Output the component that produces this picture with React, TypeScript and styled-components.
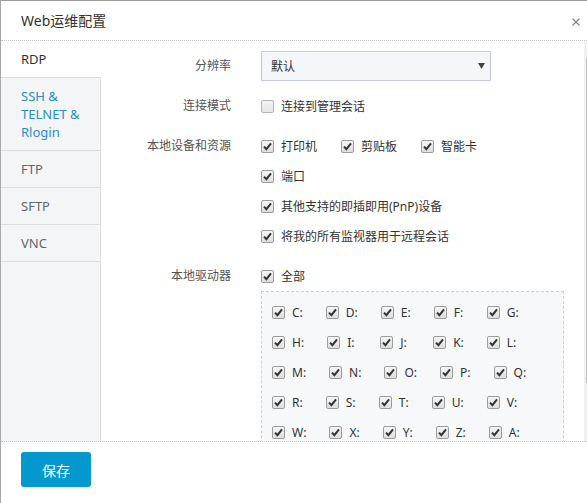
import React from "react";
import styled, { createGlobalStyle, css } from "styled-components";

const Global = createGlobalStyle`
  html, body { margin: 0; padding: 0; overflow: hidden; background: #fff; }
  body { font-family: "Noto Sans", "Noto Sans CJK SC", sans-serif; color: #333; }
  * { box-sizing: border-box; }
`;

const Dialog = styled.div`
  width: 599px;
  height: 560px;
  border-top: 1px solid #9a9a9a;
  border-left: 1px solid #a8a8a8;
  background: #fff;
  display: flex;
  flex-direction: column;
`;

const Header = styled.div`
  height: 40px;
  flex: none;
  border-bottom: 1px dotted #c4c4c4;
  display: flex;
  align-items: center;
  justify-content: space-between;
  padding: 0 19px 0 20px;
`;

const Title = styled.div`
  font-size: 14px;
  color: #333;
  line-height: 20px;
  padding-top: 1px;
`;

const Close = styled.button`
  border: none;
  background: none;
  padding: 0;
  width: 8px;
  height: 8px;
  display: flex;
  cursor: pointer;
  margin-top: 2px;
`;

const Body = styled.div`
  position: relative;
  height: 400px;
  flex: none;
  display: flex;
`;

const Sidebar = styled.div`
  width: 100px;
  flex: none;
  background: #f4f5f7;
  border-right: 1px solid #dcdcdc;
`;

const Tab = styled.div<{ $active?: boolean; $hover?: boolean }>`
  padding: 9px 20px;
  line-height: 18px;
  font-size: 13px;
  color: #666;
  border-bottom: 1px solid #dcdcdc;
  cursor: pointer;
  ${(p) =>
    p.$active &&
    css`
      background: #fff;
      color: #333;
      margin-right: -1px;
    `}
  ${(p) =>
    p.$hover &&
    css`
      color: #2a8ec9;
    `}
`;

const Content = styled.div`
  flex: 1;
  overflow: hidden;
  padding: 10px 15px 10px 0;
`;

const ScrollTrack = styled.div`
  position: absolute;
  top: 0;
  right: 0;
  bottom: 0;
  width: 15px;
  background: #f1f1f1;
  padding: 17px 2px;
`;

const ScrollThumb = styled.div`
  height: 325px;
  background: #c1c1c1;
`;

const FormRow = styled.div`
  display: grid;
  grid-template-columns: 130px 1fr;
  column-gap: 30px;
  margin-bottom: 10px;
`;

const Label = styled.div`
  text-align: right;
  line-height: 30px;
  font-size: 12px;
  color: #555;
`;

const Controls = styled.div`
  display: flex;
  flex-direction: column;
`;

const Line = styled.div`
  height: 30px;
  display: flex;
  align-items: center;
`;

const Select = styled.div`
  width: 230px;
  height: 30px;
  border: 1px solid #c7ced9;
  background: #f4f6fa;
  padding: 0 5px 0 9px;
  display: flex;
  align-items: center;
  justify-content: space-between;
  font-size: 12px;
  color: #333;
`;

const CheckItem = styled.label<{ $w?: number }>`
  display: inline-flex;
  align-items: center;
  font-size: 12px;
  color: #333;
  cursor: pointer;
  ${(p) => p.$w && css`width: ${p.$w}px;`}
`;

const Box = styled.span<{ $checked?: boolean }>`
  width: 13px;
  height: 13px;
  flex: none;
  border: 1px solid ${(p) => (p.$checked ? "#9c9c9c" : "#b5b5b5")};
  border-radius: 2px;
  background: ${(p) =>
    p.$checked
      ? "linear-gradient(#f6f6f6, #dedede)"
      : "linear-gradient(#f3f3f3, #e6e6e6)"};
  margin-right: 7px;
  display: flex;
  align-items: center;
  justify-content: center;
`;

const DriveBox = styled.div`
  width: 303px;
  border: 1px dashed #cfcfcf;
  background: #f7f8fa;
  padding: 5px 10px;
`;

const DriveRow = styled.div`
  display: flex;
  height: 30px;
  align-items: center;
`;

const DriveItem = styled.label`
  display: inline-flex;
  align-items: center;
  font-size: 12px;
  color: #333;
  margin-right: 23px;
  cursor: pointer;
`;

const DriveText = styled.span`
  min-width: 10px;
`;

const Footer = styled.div`
  border-top: 1px dotted #c4c4c4;
  padding: 10px 20px;
`;

const SaveButton = styled.button`
  width: 70px;
  height: 35px;
  border: none;
  border-radius: 3px;
  background: #0399cf;
  color: #fff;
  font-family: "Noto Sans CJK SC", sans-serif;
  font-size: 14px;
  cursor: pointer;
`;

const Check = ({ checked }: { checked?: boolean }) => (
  <Box $checked={checked}>
    {checked && (
      <svg width="9" height="9" viewBox="0 0 9 9">
        <path d="M1 4.6 L3.4 7.2 L8 1.4" fill="none" stroke="#333" strokeWidth="2" />
      </svg>
    )}
  </Box>
);

const drives = ["C", "D", "E", "F", "G", "H", "I", "J", "K", "L", "M", "N", "O", "P", "Q", "R", "S", "T", "U", "V", "W", "X", "Y", "Z", "A"];
const driveRows: string[][] = [];
for (let i = 0; i < drives.length; i += 5) driveRows.push(drives.slice(i, i + 5));

export default function App() {
  return (
    <>
      <Global />
      <Dialog>
        <Header>
          <Title>Web运维配置</Title>
          <Close aria-label="close">
            <svg width="8" height="8" viewBox="0 0 8 8">
              <path d="M0.5 0.5 L7.5 7.5 M7.5 0.5 L0.5 7.5" stroke="#7a8290" strokeWidth="1.2" />
            </svg>
          </Close>
        </Header>
        <Body>
          <Sidebar>
            <Tab $active>RDP</Tab>
            <Tab $hover>
              SSH &amp;
              <br />
              TELNET &amp;
              <br />
              Rlogin
            </Tab>
            <Tab>FTP</Tab>
            <Tab>SFTP</Tab>
            <Tab>VNC</Tab>
          </Sidebar>
          <Content>
            <FormRow>
              <Label>分辨率</Label>
              <Controls>
                <Select>
                  <span>默认</span>
                  <svg width="7" height="6" viewBox="0 0 7 6">
                    <path d="M0 0 H7 L3.5 6 Z" fill="#444" />
                  </svg>
                </Select>
              </Controls>
            </FormRow>
            <FormRow>
              <Label>连接模式</Label>
              <Controls>
                <Line>
                  <CheckItem>
                    <Check />
                    连接到管理会话
                  </CheckItem>
                </Line>
              </Controls>
            </FormRow>
            <FormRow>
              <Label>本地设备和资源</Label>
              <Controls>
                <Line>
                  <CheckItem $w={80}>
                    <Check checked />
                    打印机
                  </CheckItem>
                  <CheckItem $w={80}>
                    <Check checked />
                    剪贴板
                  </CheckItem>
                  <CheckItem $w={80}>
                    <Check checked />
                    智能卡
                  </CheckItem>
                </Line>
                <Line>
                  <CheckItem>
                    <Check checked />
                    端口
                  </CheckItem>
                </Line>
                <Line>
                  <CheckItem>
                    <Check checked />
                    其他支持的即插即用(PnP)设备
                  </CheckItem>
                </Line>
                <Line>
                  <CheckItem>
                    <Check checked />
                    将我的所有监视器用于远程会话
                  </CheckItem>
                </Line>
              </Controls>
            </FormRow>
            <FormRow>
              <Label>本地驱动器</Label>
              <Controls>
                <Line>
                  <CheckItem>
                    <Check checked />
                    全部
                  </CheckItem>
                </Line>
                <DriveBox>
                  {driveRows.map((row, i) => (
                    <DriveRow key={i}>
                      {row.map((d) => (
                        <DriveItem key={d}>
                          <Check checked />
                          <DriveText>{d}:</DriveText>
                        </DriveItem>
                      ))}
                    </DriveRow>
                  ))}
                </DriveBox>
              </Controls>
            </FormRow>
          </Content>
          <ScrollTrack>
            <ScrollThumb />
          </ScrollTrack>
        </Body>
        <Footer>
          <SaveButton>保存</SaveButton>
        </Footer>
      </Dialog>
    </>
  );
}
